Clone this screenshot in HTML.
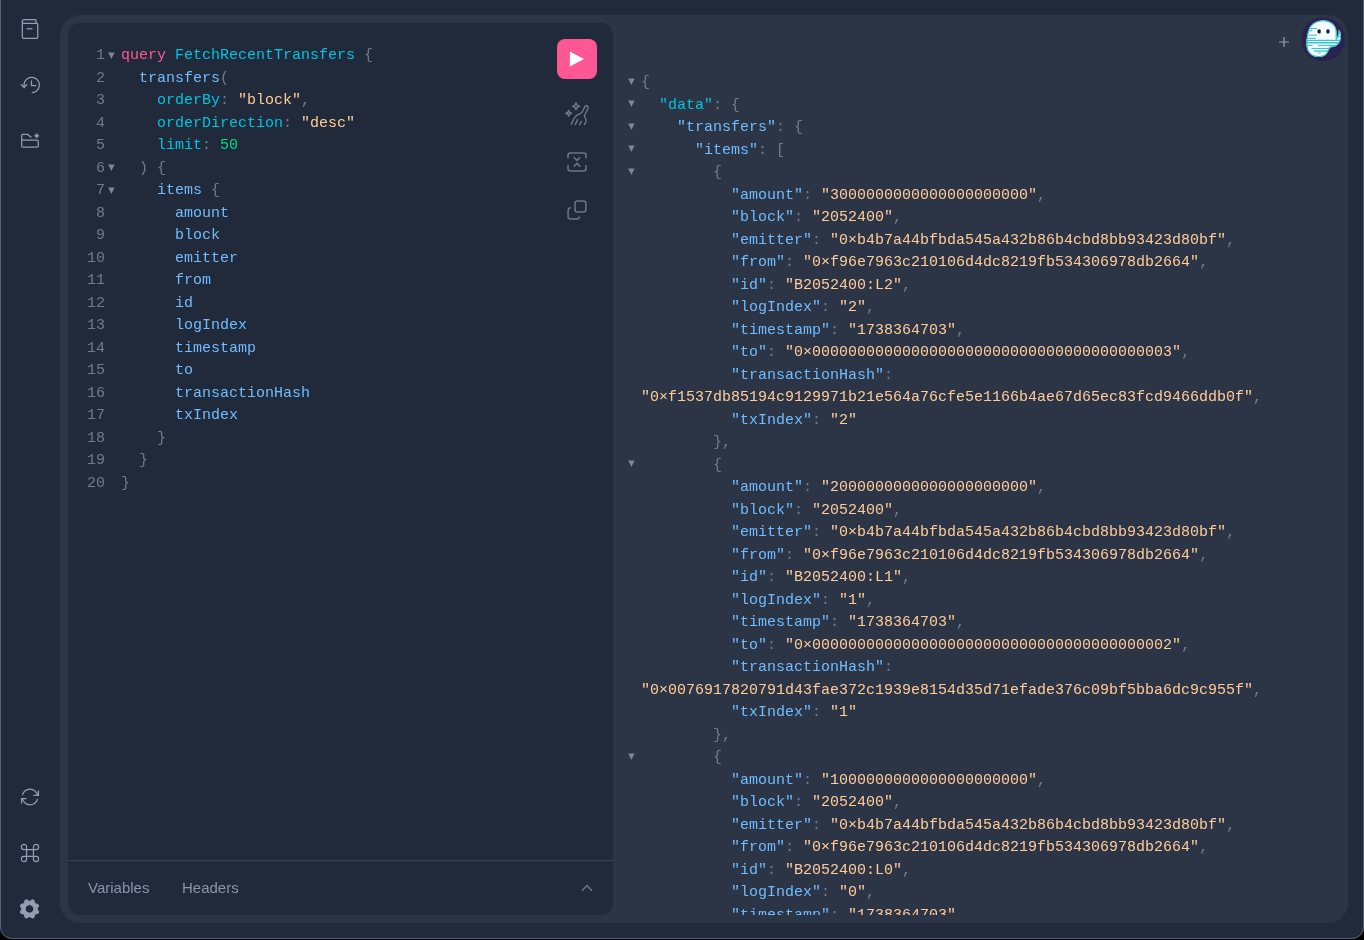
<!DOCTYPE html>
<html><head><meta charset="utf-8"><style>
*{box-sizing:border-box;margin:0;padding:0}
html,body{width:1364px;height:940px;overflow:hidden;background:#212a3b}
body{position:relative;font-family:"Liberation Sans",sans-serif;-webkit-font-smoothing:antialiased}
.ic{position:absolute;overflow:visible}
.sessions{position:absolute;left:60px;top:15px;width:1288px;height:908px;border-radius:20px;background:#2c3546}
.editors{position:absolute;left:68px;top:23px;width:545px;height:892px;border-radius:12px;background:#212a3b;overflow:hidden}
.mono{font-family:"Liberation Mono",monospace;font-size:15px}
.ln,.rl{position:absolute;height:22.5px;line-height:22.5px;white-space:pre;font-family:"Liberation Mono",monospace;font-size:15px}
.ln{left:68px}
.ln .num{position:absolute;right:auto;left:0;width:37px;text-align:right;color:#717b8e}
.ln .fold{position:absolute;left:40px;top:6.5px}
.ln .code{position:absolute;left:53px}
.rl{left:626px}
.rl .fold{position:absolute;left:2px;top:5.5px}
.rl .code{position:absolute;left:15px}
.k{color:#ff5794} .d{color:#00c3e0} .a{color:#00c3e0} .f{color:#70bcff} .s{color:#ffcc99} .n{color:#00d688} .p{color:#717b8e}
.play{position:absolute;left:557px;top:39px;width:40px;height:40px;border-radius:8px;background:#ff5794}
.tools{position:absolute;left:68px;top:860px;width:545px;height:1px;background:#374152}
.tab{position:absolute;top:878px;font-size:15px;color:#8a94a7;line-height:20px}
.resp{position:absolute;left:613px;top:23px;width:735px;height:892px;overflow:hidden}
.border{position:absolute;left:0;top:0;width:1364px;height:940px;pointer-events:none}
</style></head><body>

<svg class="ic" style="left:20px;top:19px" width="20" height="20" viewBox="0 0 20 24" fill="none" stroke="#939eb2" stroke-width="1.5">
<path d="M0.75 3C0.75 4.24264 1.75736 5.25 3 5.25H17.25M0.75 3C0.75 1.75736 1.75736 0.75 3 0.75H16.25C16.8023 0.75 17.25 1.19772 17.25 1.75V5.25M0.75 3V21C0.75 22.2426 1.75736 23.25 3 23.25H18.25C18.8023 23.25 19.25 22.8023 19.25 22.25V6.25C19.25 5.69771 18.8023 5.25 18.25 5.25H17.25"/>
<line x1="13" y1="11.75" x2="6" y2="11.75"/>
</svg>
<svg class="ic" style="left:20px;top:75px" width="20" height="20" viewBox="0 0 24 20" fill="none" stroke="#939eb2" stroke-width="1.5">
<path d="M1.59375 9.52344L4.87259 12.9944L8.07872 9.41249" stroke-linecap="square"/>
<path d="M13.75 5.25V10.75H18.75" stroke-linecap="square"/>
<path d="M4.95427 11.9332C4.55457 10.0629 4.74441 8.11477 5.49765 6.35686C6.25089 4.59894 7.5305 3.11772 9.16034 2.11709C10.7902 1.11647 12.6901 0.645626 14.5986 0.769388C16.5071 0.893151 18.3303 1.60543 19.8172 2.80818C21.3042 4.01093 22.3813 5.64501 22.9014 7.48548C23.4216 9.32595 23.3595 11.2823 22.7237 13.0857C22.0879 14.889 20.9095 16.4504 19.3515 17.5537C17.7934 18.657 15.9326 19.2477 14.0234 19.2461"/>
</svg>
<svg class="ic" style="left:0;top:0" width="60" height="160" fill="none" stroke="#939eb2" stroke-width="1.25">
<path d="M21.7 140.2V146Q21.7 147.2 22.9 147.2H37.1Q38.3 147.2 38.3 146V141.4Q38.3 140.2 37.1 140.2H21.7V135.6Q21.7 134.4 22.9 134.4H27.6L30.8 137H31.6"/>
<path d="M36.7 133.4Q37 135.5 39.1 135.8Q37 136.1 36.7 138.2Q36.4 136.1 34.3 135.8Q36.4 135.5 36.7 133.4Z" fill="#939eb2" stroke-width="0.8"/>
</svg>
<svg class="ic" style="left:20px;top:787px" width="20" height="20" viewBox="0 0 16 16" fill="none" stroke="#939eb2" stroke-width="1">
<path d="M4.75 9.25H1.25V12.75" stroke-linecap="square"/>
<path d="M11.25 6.75H14.75V3.25" stroke-linecap="square"/>
<path d="M14.1036 6.65539C13.8 5.27698 13.0387 4.04193 11.9437 3.15131C10.8487 2.26069 9.48447 1.76694 8.0731 1.75043C6.66173 1.73392 5.28633 2.19563 4.17079 3.0604C3.05526 3.92516 2.26529 5.14206 1.92947 6.513"/>
<path d="M1.89635 9.34461C2.20001 10.723 2.96131 11.9581 4.05631 12.8487C5.15131 13.7393 6.51553 14.2331 7.9269 14.2496C9.33827 14.2661 10.7137 13.8044 11.8292 12.9396C12.9447 12.0748 13.7347 10.8579 14.0705 9.487"/>
</svg>
<svg class="ic" style="left:20px;top:843px" width="20" height="20" viewBox="0 0 20 20" fill="none" stroke="#939eb2" stroke-width="1.2">
<path d="M6.56 6.56V3.98A2.58 2.58 0 1 0 3.98 6.56H6.56V13.44H13.44V6.56H6.56M13.44 6.56V3.98A2.58 2.58 0 1 1 16.02 6.56H13.44M6.56 13.44V16.02A2.58 2.58 0 1 1 3.98 13.44H6.56M13.44 13.44V16.02A2.58 2.58 0 1 0 16.02 13.44H13.44"/>
</svg>
<svg class="ic" style="left:0;top:880px" width="60" height="60" viewBox="0 880 60 60"><path d="M24.20 903.60 L25.02 900.30 L26.58 899.65 L29.50 901.40 L32.42 899.65 L33.98 900.30 L34.80 903.60 L38.10 904.42 L38.75 905.98 L37.00 908.90 L38.75 911.82 L38.10 913.38 L34.80 914.20 L33.98 917.50 L32.42 918.15 L29.50 916.40 L26.58 918.15 L25.02 917.50 L24.20 914.20 L20.90 913.38 L20.25 911.82 L22.00 908.90 L20.25 905.98 L20.90 904.42Z M33.70 908.9A4.2 4.2 0 1 0 25.30 908.9A4.2 4.2 0 1 0 33.70 908.9Z" fill="#939eb2" fill-rule="evenodd" stroke="#939eb2" stroke-width="0.9" stroke-linejoin="round"/></svg>
<div class="sessions"></div>
<div class="editors"></div>
<div style="position:absolute;left:0;top:0;width:1364px;height:915px;overflow:hidden;will-change:transform">
<div class="ln" style="top:45.0px"><span class="num">1</span><svg class=fold width=7 height=7 viewBox="0 0 7 7"><path d="M0.2 0.5H6.6L3.4 6.9Z" fill="#7f8694"/></svg><div class="code"><span class="k">query</span><span class="p"> </span><span class="d">FetchRecentTransfers</span><span class="p"> {</span></div></div><div class="ln" style="top:67.5px"><span class="num">2</span><div class="code"><span class="p">  </span><span class="f">transfers</span><span class="p">(</span></div></div><div class="ln" style="top:90.0px"><span class="num">3</span><div class="code"><span class="p">    </span><span class="a">orderBy</span><span class="p">: </span><span class="s">&quot;block&quot;</span><span class="p">,</span></div></div><div class="ln" style="top:112.5px"><span class="num">4</span><div class="code"><span class="p">    </span><span class="a">orderDirection</span><span class="p">: </span><span class="s">&quot;desc&quot;</span></div></div><div class="ln" style="top:135.0px"><span class="num">5</span><div class="code"><span class="p">    </span><span class="a">limit</span><span class="p">: </span><span class="n">50</span></div></div><div class="ln" style="top:157.5px"><span class="num">6</span><svg class=fold width=7 height=7 viewBox="0 0 7 7"><path d="M0.2 0.5H6.6L3.4 6.9Z" fill="#7f8694"/></svg><div class="code"><span class="p">  ) {</span></div></div><div class="ln" style="top:180.0px"><span class="num">7</span><svg class=fold width=7 height=7 viewBox="0 0 7 7"><path d="M0.2 0.5H6.6L3.4 6.9Z" fill="#7f8694"/></svg><div class="code"><span class="p">    </span><span class="f">items</span><span class="p"> {</span></div></div><div class="ln" style="top:202.5px"><span class="num">8</span><div class="code"><span class="p">      </span><span class="f">amount</span></div></div><div class="ln" style="top:225.0px"><span class="num">9</span><div class="code"><span class="p">      </span><span class="f">block</span></div></div><div class="ln" style="top:247.5px"><span class="num">10</span><div class="code"><span class="p">      </span><span class="f">emitter</span></div></div><div class="ln" style="top:270.0px"><span class="num">11</span><div class="code"><span class="p">      </span><span class="f">from</span></div></div><div class="ln" style="top:292.5px"><span class="num">12</span><div class="code"><span class="p">      </span><span class="f">id</span></div></div><div class="ln" style="top:315.0px"><span class="num">13</span><div class="code"><span class="p">      </span><span class="f">logIndex</span></div></div><div class="ln" style="top:337.5px"><span class="num">14</span><div class="code"><span class="p">      </span><span class="f">timestamp</span></div></div><div class="ln" style="top:360.0px"><span class="num">15</span><div class="code"><span class="p">      </span><span class="f">to</span></div></div><div class="ln" style="top:382.5px"><span class="num">16</span><div class="code"><span class="p">      </span><span class="f">transactionHash</span></div></div><div class="ln" style="top:405.0px"><span class="num">17</span><div class="code"><span class="p">      </span><span class="f">txIndex</span></div></div><div class="ln" style="top:427.5px"><span class="num">18</span><div class="code"><span class="p">    }</span></div></div><div class="ln" style="top:450.0px"><span class="num">19</span><div class="code"><span class="p">  }</span></div></div><div class="ln" style="top:472.5px"><span class="num">20</span><div class="code"><span class="p">}</span></div></div>
</div>

<div class="play"><svg width="40" height="40" viewBox="0 0 40 40"><path d="M12.9 12.5L26.9 20L12.9 27.5Z" fill="#fff"/></svg></div>
<svg class="ic" style="left:0;top:0" width="613" height="240" fill="none" stroke="#6c7689" stroke-width="1.5" stroke-linecap="round" stroke-linejoin="round">
<path d="M576 102.6Q576.4 105.8 579.6 106.2Q576.4 106.6 576 109.8Q575.6 106.6 572.4 106.2Q575.6 105.8 576 102.6Z" stroke-width="1.4"/>
<path d="M568.7 110.4Q569 113 571.6 113.3Q569 113.6 568.7 116.2Q568.4 113.6 565.8 113.3Q568.4 113 568.7 110.4Z" stroke-width="1.4"/>
<path d="M571.2 124.4L574.4 118Q576 114.8 579.5 114Q582 113.5 583 110.5L584.8 106.6Q586.5 104.8 588 106.8Q588.4 107.6 588 108.5L584.3 116Q586.4 119.5 586 121.6L584.5 124.6" stroke-width="1.4"/>
<path d="M577.7 119.6L575.3 124.6" stroke-width="1.4"/>
<path d="M581.4 121.6L579.6 124.9" stroke-width="1.4"/>
<path d="M568 158.6V155.6Q568 153.1 570.5 153.1H583.5Q586 153.1 586 155.6V158.6M568 165.1V168.5Q568 171 570.5 171H583.5Q586 171 586 168.5V165.1" stroke-linecap="butt"/>
<path d="M573.8 157.2L577 160.4L580.2 157.2M573.8 166.6L577 163.4L580.2 166.6" stroke-linecap="butt" stroke-linejoin="miter"/>
<path d="M570.8 207.4Q568.1 207.8 568.1 210.5V216.4Q568.1 218.9 570.6 218.9H576.9Q579.4 218.9 579.4 216.4" stroke-linecap="butt"/>
<rect x="575" y="201.1" width="10.9" height="10.9" rx="2.5"/>
</svg>

<div class="tools"></div>
<div style="position:absolute;left:0;top:0;width:300px;height:940px;will-change:transform"><div class="tab" style="left:88px">Variables</div>
<div class="tab" style="left:182px">Headers</div></div>
<svg class="ic" style="left:575px;top:878px" width="24" height="20" fill="none" stroke="#6c7689" stroke-width="1.5"><path d="M7 12.8L12 7.6L17 12.8"/></svg>
<div style="position:absolute;left:0;top:0;width:1364px;height:915px;overflow:hidden;will-change:transform">
<div class="rl" style="top:72.0px"><svg class=fold width=7 height=7 viewBox="0 0 7 7"><path d="M0.2 0.5H6.6L3.4 6.9Z" fill="#7f8694"/></svg><div class="code"><span class="p">{</span></div></div><div class="rl" style="top:94.5px"><svg class=fold width=7 height=7 viewBox="0 0 7 7"><path d="M0.2 0.5H6.6L3.4 6.9Z" fill="#7f8694"/></svg><div class="code"><span class="p">  </span><span class="d">&quot;data&quot;</span><span class="p">: {</span></div></div><div class="rl" style="top:117.0px"><svg class=fold width=7 height=7 viewBox="0 0 7 7"><path d="M0.2 0.5H6.6L3.4 6.9Z" fill="#7f8694"/></svg><div class="code"><span class="p">    </span><span class="f">&quot;transfers&quot;</span><span class="p">: {</span></div></div><div class="rl" style="top:139.5px"><svg class=fold width=7 height=7 viewBox="0 0 7 7"><path d="M0.2 0.5H6.6L3.4 6.9Z" fill="#7f8694"/></svg><div class="code"><span class="p">      </span><span class="f">&quot;items&quot;</span><span class="p">: [</span></div></div><div class="rl" style="top:162.0px"><svg class=fold width=7 height=7 viewBox="0 0 7 7"><path d="M0.2 0.5H6.6L3.4 6.9Z" fill="#7f8694"/></svg><div class="code"><span class="p">        {</span></div></div><div class="rl" style="top:184.5px"><div class="code"><span class="p">          </span><span class="f">&quot;amount&quot;</span><span class="p">: </span><span class="s">&quot;3000000000000000000000&quot;</span><span class="p">,</span></div></div><div class="rl" style="top:207.0px"><div class="code"><span class="p">          </span><span class="f">&quot;block&quot;</span><span class="p">: </span><span class="s">&quot;2052400&quot;</span><span class="p">,</span></div></div><div class="rl" style="top:229.5px"><div class="code"><span class="p">          </span><span class="f">&quot;emitter&quot;</span><span class="p">: </span><span class="s">&quot;0×b4b7a44bfbda545a432b86b4cbd8bb93423d80bf&quot;</span><span class="p">,</span></div></div><div class="rl" style="top:252.0px"><div class="code"><span class="p">          </span><span class="f">&quot;from&quot;</span><span class="p">: </span><span class="s">&quot;0×f96e7963c210106d4dc8219fb534306978db2664&quot;</span><span class="p">,</span></div></div><div class="rl" style="top:274.5px"><div class="code"><span class="p">          </span><span class="f">&quot;id&quot;</span><span class="p">: </span><span class="s">&quot;B2052400:L2&quot;</span><span class="p">,</span></div></div><div class="rl" style="top:297.0px"><div class="code"><span class="p">          </span><span class="f">&quot;logIndex&quot;</span><span class="p">: </span><span class="s">&quot;2&quot;</span><span class="p">,</span></div></div><div class="rl" style="top:319.5px"><div class="code"><span class="p">          </span><span class="f">&quot;timestamp&quot;</span><span class="p">: </span><span class="s">&quot;1738364703&quot;</span><span class="p">,</span></div></div><div class="rl" style="top:342.0px"><div class="code"><span class="p">          </span><span class="f">&quot;to&quot;</span><span class="p">: </span><span class="s">&quot;0×0000000000000000000000000000000000000003&quot;</span><span class="p">,</span></div></div><div class="rl" style="top:364.5px"><div class="code"><span class="p">          </span><span class="f">&quot;transactionHash&quot;</span><span class="p">:</span></div></div><div class="rl" style="top:387.0px"><div class="code"><span class="s">&quot;0×f1537db85194c9129971b21e564a76cfe5e1166b4ae67d65ec83fcd9466ddb0f&quot;</span><span class="p">,</span></div></div><div class="rl" style="top:409.5px"><div class="code"><span class="p">          </span><span class="f">&quot;txIndex&quot;</span><span class="p">: </span><span class="s">&quot;2&quot;</span></div></div><div class="rl" style="top:432.0px"><div class="code"><span class="p">        },</span></div></div><div class="rl" style="top:454.5px"><svg class=fold width=7 height=7 viewBox="0 0 7 7"><path d="M0.2 0.5H6.6L3.4 6.9Z" fill="#7f8694"/></svg><div class="code"><span class="p">        {</span></div></div><div class="rl" style="top:477.0px"><div class="code"><span class="p">          </span><span class="f">&quot;amount&quot;</span><span class="p">: </span><span class="s">&quot;2000000000000000000000&quot;</span><span class="p">,</span></div></div><div class="rl" style="top:499.5px"><div class="code"><span class="p">          </span><span class="f">&quot;block&quot;</span><span class="p">: </span><span class="s">&quot;2052400&quot;</span><span class="p">,</span></div></div><div class="rl" style="top:522.0px"><div class="code"><span class="p">          </span><span class="f">&quot;emitter&quot;</span><span class="p">: </span><span class="s">&quot;0×b4b7a44bfbda545a432b86b4cbd8bb93423d80bf&quot;</span><span class="p">,</span></div></div><div class="rl" style="top:544.5px"><div class="code"><span class="p">          </span><span class="f">&quot;from&quot;</span><span class="p">: </span><span class="s">&quot;0×f96e7963c210106d4dc8219fb534306978db2664&quot;</span><span class="p">,</span></div></div><div class="rl" style="top:567.0px"><div class="code"><span class="p">          </span><span class="f">&quot;id&quot;</span><span class="p">: </span><span class="s">&quot;B2052400:L1&quot;</span><span class="p">,</span></div></div><div class="rl" style="top:589.5px"><div class="code"><span class="p">          </span><span class="f">&quot;logIndex&quot;</span><span class="p">: </span><span class="s">&quot;1&quot;</span><span class="p">,</span></div></div><div class="rl" style="top:612.0px"><div class="code"><span class="p">          </span><span class="f">&quot;timestamp&quot;</span><span class="p">: </span><span class="s">&quot;1738364703&quot;</span><span class="p">,</span></div></div><div class="rl" style="top:634.5px"><div class="code"><span class="p">          </span><span class="f">&quot;to&quot;</span><span class="p">: </span><span class="s">&quot;0×0000000000000000000000000000000000000002&quot;</span><span class="p">,</span></div></div><div class="rl" style="top:657.0px"><div class="code"><span class="p">          </span><span class="f">&quot;transactionHash&quot;</span><span class="p">:</span></div></div><div class="rl" style="top:679.5px"><div class="code"><span class="s">&quot;0×0076917820791d43fae372c1939e8154d35d71efade376c09bf5bba6dc9c955f&quot;</span><span class="p">,</span></div></div><div class="rl" style="top:702.0px"><div class="code"><span class="p">          </span><span class="f">&quot;txIndex&quot;</span><span class="p">: </span><span class="s">&quot;1&quot;</span></div></div><div class="rl" style="top:724.5px"><div class="code"><span class="p">        },</span></div></div><div class="rl" style="top:747.0px"><svg class=fold width=7 height=7 viewBox="0 0 7 7"><path d="M0.2 0.5H6.6L3.4 6.9Z" fill="#7f8694"/></svg><div class="code"><span class="p">        {</span></div></div><div class="rl" style="top:769.5px"><div class="code"><span class="p">          </span><span class="f">&quot;amount&quot;</span><span class="p">: </span><span class="s">&quot;1000000000000000000000&quot;</span><span class="p">,</span></div></div><div class="rl" style="top:792.0px"><div class="code"><span class="p">          </span><span class="f">&quot;block&quot;</span><span class="p">: </span><span class="s">&quot;2052400&quot;</span><span class="p">,</span></div></div><div class="rl" style="top:814.5px"><div class="code"><span class="p">          </span><span class="f">&quot;emitter&quot;</span><span class="p">: </span><span class="s">&quot;0×b4b7a44bfbda545a432b86b4cbd8bb93423d80bf&quot;</span><span class="p">,</span></div></div><div class="rl" style="top:837.0px"><div class="code"><span class="p">          </span><span class="f">&quot;from&quot;</span><span class="p">: </span><span class="s">&quot;0×f96e7963c210106d4dc8219fb534306978db2664&quot;</span><span class="p">,</span></div></div><div class="rl" style="top:859.5px"><div class="code"><span class="p">          </span><span class="f">&quot;id&quot;</span><span class="p">: </span><span class="s">&quot;B2052400:L0&quot;</span><span class="p">,</span></div></div><div class="rl" style="top:882.0px"><div class="code"><span class="p">          </span><span class="f">&quot;logIndex&quot;</span><span class="p">: </span><span class="s">&quot;0&quot;</span><span class="p">,</span></div></div><div class="rl" style="top:904.5px"><div class="code"><span class="p">          </span><span class="f">&quot;timestamp&quot;</span><span class="p">: </span><span class="s">&quot;1738364703&quot;</span><span class="p">,</span></div></div><div class="rl" style="top:927.0px"><div class="code"><span class="p">          </span><span class="f">&quot;to&quot;</span><span class="p">: </span><span class="s">&quot;0×0000000000000000000000000000000000000001&quot;</span><span class="p">,</span></div></div>
</div>
<svg class="ic" style="left:1276px;top:33.5px" width="16" height="16" stroke="#939eb2" stroke-width="1.2"><path d="M8 3V13M3 8H13"/></svg>
<svg class="ic" style="left:1299px;top:15px" width="48" height="48" viewBox="0 0 48 48">
<defs><clipPath id="gh"><path d="M24.3 5.2C31 5.2 37.4 9.5 37.6 17L37.6 23.2Q39.6 20.5 39.8 14.8Q42.2 16.8 42 21.5Q42 27 38 30.2Q35.5 32.2 32.4 32.3Q30.5 32.5 29.6 35.5Q27.5 41.5 20.5 42Q12.8 42.3 9.2 36.5Q7.2 33 7.5 26.5Q7.8 18 11 11.7Q15.5 5.2 24.3 5.2Z"/></clipPath></defs>
<circle cx="24" cy="24.3" r="22" fill="#2c2250"/>
<g clip-path="url(#gh)">
<rect x="0" y="0" width="48" height="48" fill="#f2fbfd"/>
<g fill="#3cc3cc">
<rect x="11.5" y="13" width="6.5" height="1"/>
<rect x="10.5" y="15.3" width="2.8" height="1"/>
<rect x="9.5" y="19.6" width="8.5" height="1.1"/>
<rect x="9" y="22.8" width="8" height="1.1"/>
<rect x="7" y="24.8" width="36" height="1.2"/>
<rect x="7" y="26.9" width="36" height="1.6"/>
<rect x="7" y="29.8" width="6.5" height="1.1"/>
<rect x="19" y="29.8" width="20" height="1.1"/>
<rect x="12.5" y="33" width="17" height="1.1"/>
<rect x="15" y="35.4" width="14" height="1.3"/>
<rect x="18.8" y="37.5" width="2.8" height="1"/>
<rect x="37.5" y="18" width="6" height="1"/>
<rect x="37" y="21" width="6" height="1"/>
</g>
<path d="M24.3 5.2C31 5.2 37.4 9.5 37.6 17L37.6 23.2Q39.6 20.5 39.8 14.8Q42.2 16.8 42 21.5Q42 27 38 30.2Q35.5 32.2 32.4 32.3Q30.5 32.5 29.6 35.5Q27.5 41.5 20.5 42Q12.8 42.3 9.2 36.5Q7.2 33 7.5 26.5Q7.8 18 11 11.7Q15.5 5.2 24.3 5.2Z" fill="none" stroke="#2ec4cf" stroke-width="2"/>
</g>
<rect x="18.5" y="14.2" width="3.3" height="4.4" rx="1.6" fill="#1d1840"/>
<rect x="27.3" y="14.2" width="3.3" height="4.4" rx="1.6" fill="#1d1840"/>
</svg>
<svg class="border" width="1364" height="940"><path d="M0 927A12 12 0 0 0 12 939H1352A12 12 0 0 0 1364 927V940H0Z" fill="#000"/><path d="M0.5 0V927A11.5 11.5 0 0 0 12 938.5H1352A11.5 11.5 0 0 0 1363.5 927V0" fill="none" stroke="#5b616d" stroke-width="1"/></svg>
</body></html>
